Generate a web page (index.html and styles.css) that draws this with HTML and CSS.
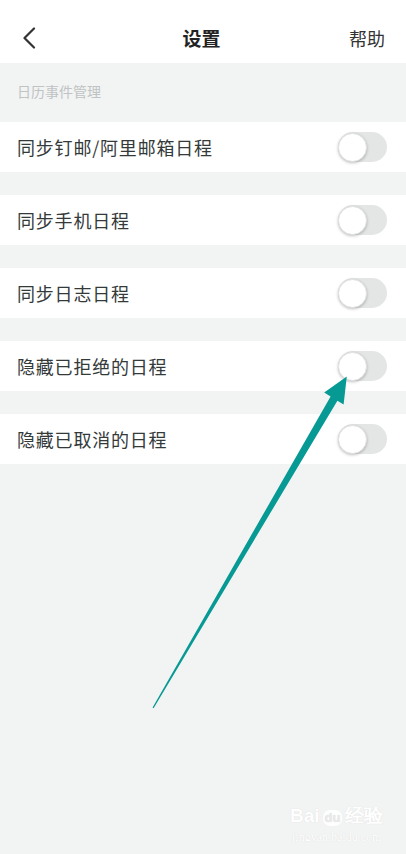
FILE: index.html
```html
<!DOCTYPE html>
<html>
<head>
    <title>设置</title>
    <link rel="stylesheet" href="styles.css">
</head>
<body>
    <div class="page">
        <div class="header">
            <div class="back">
                <svg width="14" height="22" viewBox="0 0 14 22">
                    <path d="M12 1.5 L2.5 11 L12 20.5" fill="none" stroke="#333" stroke-width="2.2" stroke-linecap="round" stroke-linejoin="round"/>
                </svg>
            </div>
            <div class="title">设置</div>
            <div class="help">帮助</div>
        </div>

        <div class="section-title">日历事件管理</div>

        <div class="list">
            <div class="row">
                <span class="label">同步钉邮/阿里邮箱日程</span>
                <span class="switch"><span class="knob"></span></span>
            </div>
            <div class="row">
                <span class="label">同步手机日程</span>
                <span class="switch"><span class="knob"></span></span>
            </div>
            <div class="row">
                <span class="label">同步日志日程</span>
                <span class="switch"><span class="knob"></span></span>
            </div>
            <div class="row">
                <span class="label">隐藏已拒绝的日程</span>
                <span class="switch"><span class="knob"></span></span>
            </div>
            <div class="row">
                <span class="label">隐藏已取消的日程</span>
                <span class="switch"><span class="knob"></span></span>
            </div>
        </div>

        <!-- annotation arrow drawn over the screenshot -->
        <svg class="arrow" width="406" height="854" viewBox="0 0 406 854">
            <polygon points="152.6,707.6 330.6,396.4 324.2,392.6 346.8,376.6 343.6,404.6 337.4,400.8 153.6,708.2" fill="#079a94"/>
        </svg>

        <div class="watermark">
            <div class="wm-logo">Bai<span class="wm-paw">du</span>经验</div>
            <div class="wm-url">jingyan.baidu.com</div>
        </div>
    </div>
</body>
</html>
```

FILE: styles.css
```css
* {
    box-sizing: border-box;
}

body {
    margin: 0;
    padding: 0;
    background-color: #f2f3f3;
    font-family: "Noto Sans CJK SC", "Noto Sans", sans-serif;
}

.page {
    position: relative;
    width: 406px;
    height: 854px;
    overflow: hidden;
}

.header {
    display: grid;
    grid-template-columns: 1fr auto 1fr;
    align-items: center;
    height: 63px;
    padding: 12px 21px 0 22px;
    background-color: #fff;
}

.back {
    display: flex;
    align-items: center;
}

.title {
    font-size: 19px;
    font-weight: bold;
    color: #222;
    margin-right: 4px;
}

.help {
    justify-self: end;
    font-size: 18px;
    color: #333;
}

.section-title {
    height: 59px;
    padding: 18px 0 0 17px;
    font-size: 14px;
    color: #bfc3c3;
}

.row {
    display: flex;
    align-items: center;
    justify-content: space-between;
    height: 50px;
    margin-bottom: 23px;
    padding: 0 19px 0 17px;
    background-color: #fff;
}

.label {
    font-size: 18px;
    letter-spacing: 0.8px;
    color: #34393a;
}

.switch {
    display: flex;
    align-items: center;
    width: 49px;
    height: 30px;
    border-radius: 15px;
    background-color: #e4e5e5;
}

.knob {
    width: 29px;
    height: 29px;
    border-radius: 50%;
    background-color: #fff;
    border: 1px solid #e2e2e2;
    box-shadow: 0 1px 3px rgba(0, 0, 0, 0.25);
}

.arrow {
    position: absolute;
    left: 0;
    top: 0;
}

.watermark {
    position: absolute;
    left: 290px;
    top: 804px;
    color: #fff;
    text-shadow: 0 0 1px rgba(0, 0, 0, 0.12);
}

.wm-logo {
    font-family: "Liberation Sans", sans-serif;
    font-size: 19px;
    font-weight: bold;
    line-height: 24px;
}

.wm-paw {
    display: inline-block;
    margin: 0 3px;
    padding: 0 2px;
    font-size: 13px;
    line-height: 16px;
    border-radius: 7px;
    background-color: rgba(255, 255, 255, 0.9);
    color: #e8e9e9;
}

.wm-url {
    font-family: "Liberation Serif", serif;
    font-size: 12px;
    margin-top: 2px;
    padding-left: 2px;
}
```
